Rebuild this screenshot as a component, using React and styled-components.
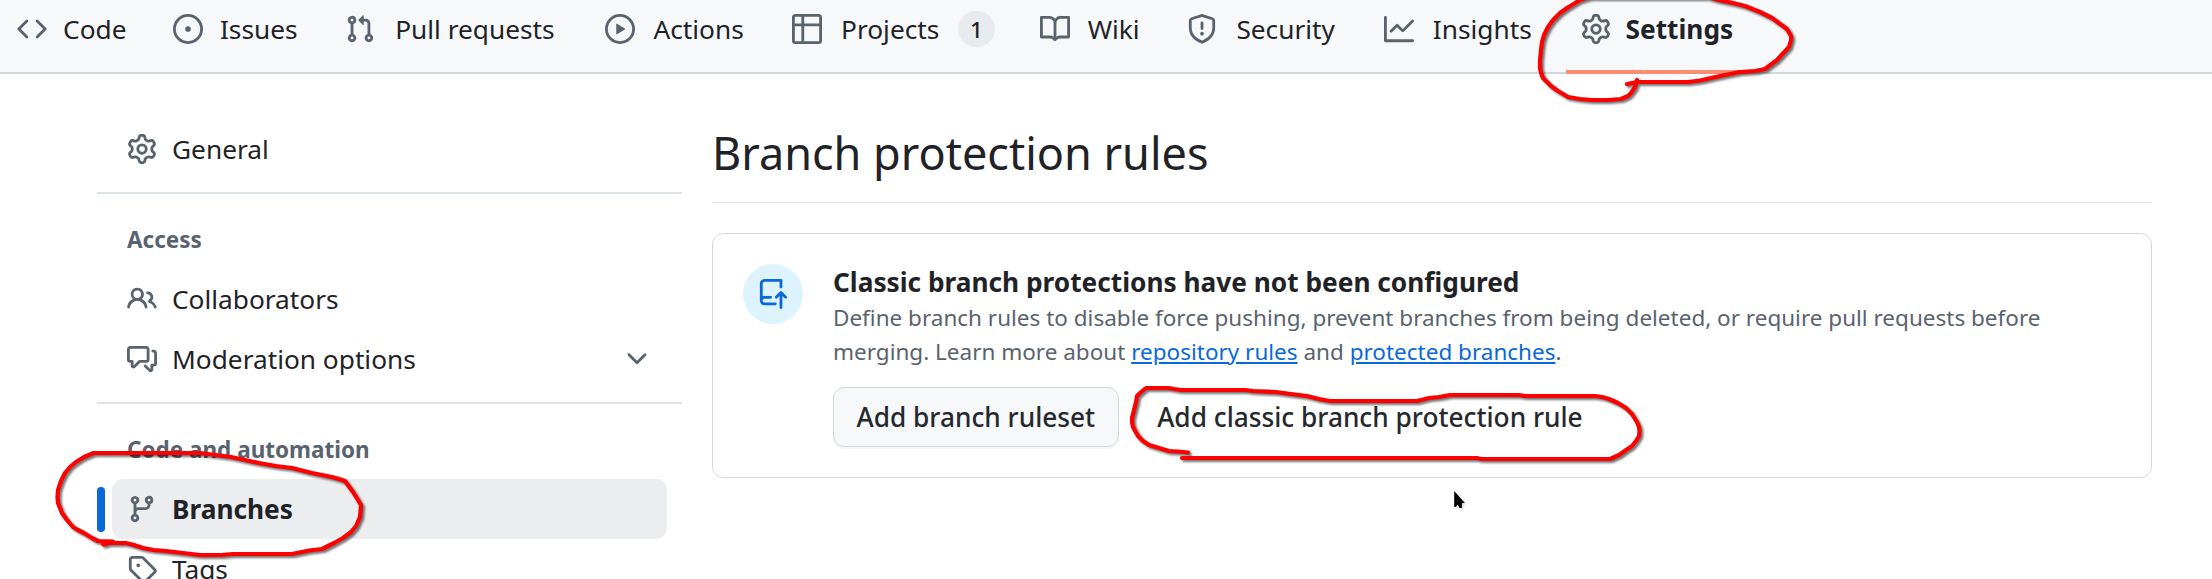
import React from "react";
import styled, { createGlobalStyle, css } from "styled-components";

const GlobalStyle = createGlobalStyle`
  *, *::before, *::after { box-sizing: border-box; }
  html, body { margin: 0; padding: 0; background: #ffffff; overflow: hidden; }
  body {
    color: #1f2328;
    font-family: "Noto Sans", "Liberation Sans", sans-serif;
    font-size: 26.25px;
    line-height: 40px;
  }
`;

const ICONS = {
  code: "m11.28 3.22 4.25 4.25a.75.75 0 0 1 0 1.06l-4.25 4.25a.749.749 0 0 1-1.275-.326.749.749 0 0 1 .215-.734L13.94 8l-3.72-3.72a.749.749 0 0 1 .326-1.275.749.749 0 0 1 .734.215Zm-6.56 0a.751.751 0 0 1 1.042.018.751.751 0 0 1 .018 1.042L2.06 8l3.72 3.72a.749.749 0 0 1-.326 1.275.749.749 0 0 1-.734-.215L.47 8.53a.75.75 0 0 1 0-1.06Z",
  issue: "M8 9.5a1.5 1.5 0 1 0 0-3 1.5 1.5 0 0 0 0 3ZM8 0a8 8 0 1 1 0 16A8 8 0 0 1 8 0ZM1.5 8a6.5 6.5 0 1 0 13 0 6.5 6.5 0 0 0-13 0Z",
  pull: "M1.5 3.25a2.25 2.25 0 1 1 3 2.122v5.256a2.251 2.251 0 1 1-1.5 0V5.372A2.25 2.25 0 0 1 1.5 3.25Zm5.677-.177L9.573.677A.25.25 0 0 1 10 .854V2.5h1A2.5 2.5 0 0 1 13.5 5v5.628a2.251 2.251 0 1 1-1.5 0V5a1 1 0 0 0-1-1h-1v1.646a.25.25 0 0 1-.427.177L7.177 3.427a.25.25 0 0 1 0-.354ZM3.75 2.5a.75.75 0 1 0 0 1.5.75.75 0 0 0 0-1.5Zm0 9.5a.75.75 0 1 0 0 1.5.75.75 0 0 0 0-1.5Zm8.25.75a.75.75 0 1 0 1.5 0 .75.75 0 0 0-1.5 0Z",
  play: "M8 0a8 8 0 1 1 0 16A8 8 0 0 1 8 0ZM1.5 8a6.5 6.5 0 1 0 13 0 6.5 6.5 0 0 0-13 0Zm4.879-2.773 4.264 2.559a.25.25 0 0 1 0 .428l-4.264 2.559A.25.25 0 0 1 6 10.559V5.442a.25.25 0 0 1 .379-.215Z",
  table: "M0 1.75C0 .784.784 0 1.75 0h12.5C15.216 0 16 .784 16 1.75v12.5A1.75 1.75 0 0 1 14.25 16H1.75A1.75 1.75 0 0 1 0 14.25ZM6.5 6.5v8h7.75a.25.25 0 0 0 .25-.25V6.5Zm8-1.5V1.75a.25.25 0 0 0-.25-.25H6.5V5Zm-13 1.5v7.75c0 .138.112.25.25.25H5v-8ZM5 5V1.5H1.75a.25.25 0 0 0-.25.25V5Z",
  book: "M0 1.75A.75.75 0 0 1 .75 1h4.253c1.227 0 2.317.59 3 1.501A3.743 3.743 0 0 1 11.006 1h4.245a.75.75 0 0 1 .75.75v10.5a.75.75 0 0 1-.75.75h-4.507a2.25 2.25 0 0 0-1.591.659l-.622.621a.75.75 0 0 1-1.06 0l-.622-.621A2.25 2.25 0 0 0 5.258 13H.75a.75.75 0 0 1-.75-.75Zm7.251 10.324.004-5.073-.002-2.253A2.25 2.25 0 0 0 5.003 2.5H1.5v9h3.757a3.75 3.75 0 0 1 1.994.574ZM8.755 4.75l-.004 7.322a3.752 3.752 0 0 1 1.992-.572H14.5v-9h-3.495a2.25 2.25 0 0 0-2.25 2.25Z",
  shield: "M7.467.133a1.748 1.748 0 0 1 1.066 0l5.25 1.68A1.75 1.75 0 0 1 15 3.48V7c0 1.566-.32 3.182-1.303 4.682-.983 1.498-2.585 2.813-5.032 3.855a1.697 1.697 0 0 1-1.33 0c-2.447-1.042-4.049-2.357-5.032-3.855C1.32 10.182 1 8.566 1 7V3.48a1.75 1.75 0 0 1 1.217-1.667Zm.61 1.429a.25.25 0 0 0-.153 0l-5.25 1.68a.25.25 0 0 0-.174.238V7c0 1.358.275 2.666 1.057 3.86.784 1.194 2.121 2.34 4.366 3.297a.196.196 0 0 0 .154 0c2.245-.956 3.582-2.104 4.366-3.298C13.225 9.666 13.5 8.36 13.5 7V3.48a.251.251 0 0 0-.174-.237l-5.25-1.68ZM8.75 4.75v3a.75.75 0 0 1-1.5 0v-3a.75.75 0 0 1 1.5 0ZM9 10.5a1 1 0 1 1-2 0 1 1 0 0 1 2 0Z",
  graph: "M1.5 1.75V13.5h13.75a.75.75 0 0 1 0 1.5H.75a.75.75 0 0 1-.75-.75V1.75a.75.75 0 0 1 1.5 0Zm14.28 2.53-5.25 5.25a.75.75 0 0 1-1.06 0L7 7.06 4.28 9.78a.751.751 0 0 1-1.042-.018.751.751 0 0 1-.018-1.042l3.25-3.25a.75.75 0 0 1 1.06 0L10 7.94l4.72-4.72a.751.751 0 0 1 1.042.018.751.751 0 0 1 .018 1.042Z",
  gear: "M8 0a8.2 8.2 0 0 1 .701.031C9.444.095 9.99.645 10.16 1.29l.288 1.107c.018.066.079.158.212.224.231.114.454.243.668.386.123.082.233.09.299.071l1.103-.303c.644-.176 1.392.021 1.82.63.27.385.506.792.704 1.218.315.675.111 1.422-.364 1.891l-.814.806c-.049.048-.098.147-.088.294.016.257.016.515 0 .772-.01.147.038.246.088.294l.814.806c.475.469.679 1.216.364 1.891a7.977 7.977 0 0 1-.704 1.217c-.428.61-1.176.807-1.82.63l-1.102-.302c-.067-.019-.177-.011-.3.071a5.909 5.909 0 0 1-.668.386c-.133.066-.194.158-.211.224l-.29 1.106c-.168.646-.715 1.196-1.458 1.26a8.006 8.006 0 0 1-1.402 0c-.743-.064-1.289-.614-1.458-1.26l-.289-1.106c-.018-.066-.079-.158-.212-.224a5.738 5.738 0 0 1-.668-.386c-.123-.082-.233-.09-.299-.071l-1.103.303c-.644.176-1.392-.021-1.82-.63a8.12 8.12 0 0 1-.704-1.218c-.315-.675-.111-1.422.363-1.891l.815-.806c.05-.048.098-.147.088-.294a6.214 6.214 0 0 1 0-.772c.01-.147-.038-.246-.088-.294l-.815-.806C.635 6.045.431 5.298.746 4.623a7.92 7.92 0 0 1 .704-1.217c.428-.61 1.176-.807 1.82-.63l1.102.302c.067.019.177.011.3-.071.214-.143.437-.272.668-.386.133-.066.194-.158.211-.224l.29-1.106C6.009.645 6.556.095 7.299.03 7.53.01 7.764 0 8 0Zm-.571 1.525c-.036.003-.108.036-.137.146l-.289 1.105c-.147.561-.549.967-.998 1.189-.173.086-.34.183-.5.29-.417.278-.97.423-1.529.27l-1.103-.303c-.109-.03-.175.016-.195.045-.22.312-.412.644-.573.99-.014.031-.021.11.059.19l.815.806c.411.406.562.957.53 1.456a4.709 4.709 0 0 0 0 .582c.032.499-.119 1.05-.53 1.456l-.815.806c-.081.08-.073.159-.059.19.162.346.353.677.573.989.02.03.085.076.195.046l1.102-.303c.56-.153 1.113-.008 1.53.27.161.107.328.204.501.29.447.222.85.629.997 1.189l.289 1.105c.029.109.101.143.137.146a6.6 6.6 0 0 0 1.142 0c.036-.003.108-.036.137-.146l.289-1.105c.147-.561.549-.967.998-1.189.173-.086.34-.183.5-.29.417-.278.97-.423 1.529-.27l1.103.303c.109.029.175-.016.195-.045.22-.313.411-.644.573-.99.014-.031.021-.11-.059-.19l-.815-.806c-.411-.406-.562-.957-.53-1.456a4.709 4.709 0 0 0 0-.582c-.032-.499.119-1.05.53-1.456l.815-.806c.081-.08.073-.159.059-.19a6.464 6.464 0 0 0-.573-.989c-.02-.03-.085-.076-.195-.046l-1.102.303c-.56.153-1.113.008-1.53-.27a4.44 4.44 0 0 0-.501-.29c-.447-.222-.85-.629-.997-1.189l-.289-1.105c-.029-.11-.101-.143-.137-.146a6.6 6.6 0 0 0-1.142 0ZM11 8a3 3 0 1 1-6 0 3 3 0 0 1 6 0ZM9.5 8a1.5 1.5 0 1 0-3.001.001A1.5 1.5 0 0 0 9.5 8Z",
  people: "M2 5.5a3.5 3.5 0 1 1 5.898 2.549 5.508 5.508 0 0 1 3.034 4.084.75.75 0 1 1-1.482.235 4 4 0 0 0-7.9 0 .75.75 0 0 1-1.482-.236A5.507 5.507 0 0 1 3.102 8.05 3.493 3.493 0 0 1 2 5.5ZM11 4a3.001 3.001 0 0 1 2.22 5.018 5.01 5.01 0 0 1 2.56 3.012.749.749 0 0 1-.885.954.752.752 0 0 1-.549-.514 3.507 3.507 0 0 0-2.522-2.372.75.75 0 0 1-.574-.73v-.352a.75.75 0 0 1 .416-.672A1.5 1.5 0 0 0 11 5.5.75.75 0 0 1 11 4Zm-5.5-.5a2 2 0 1 0-.001 3.999A2 2 0 0 0 5.5 3.5Z",
  discussion: "M1.75 1h8.5c.966 0 1.75.784 1.75 1.75v5.5A1.75 1.75 0 0 1 10.25 10H7.061l-2.574 2.573A1.458 1.458 0 0 1 2 11.543V10h-.25A1.75 1.75 0 0 1 0 8.25v-5.5C0 1.784.784 1 1.75 1ZM1.5 2.75v5.5c0 .138.112.25.25.25h1a.75.75 0 0 1 .75.75v2.19l2.72-2.72a.749.749 0 0 1 .53-.22h3.5a.25.25 0 0 0 .25-.25v-5.5a.25.25 0 0 0-.25-.25h-8.5a.25.25 0 0 0-.25.25Zm13 2a.25.25 0 0 0-.25-.25h-.5a.75.75 0 0 1 0-1.5h.5c.966 0 1.75.784 1.75 1.75v5.5A1.75 1.75 0 0 1 14.25 12H14v1.543a1.458 1.458 0 0 1-2.487 1.03L9.22 12.28a.749.749 0 0 1 .326-1.275.749.749 0 0 1 .734.215l2.22 2.22v-2.19a.75.75 0 0 1 .75-.75h1a.25.25 0 0 0 .25-.25Z",
  chevron: "M12.78 5.22a.749.749 0 0 1 0 1.06l-4.25 4.25a.749.749 0 0 1-1.06 0L3.22 6.28a.749.749 0 1 1 1.06-1.06L8 8.939l3.72-3.719a.749.749 0 0 1 1.06 0Z",
  branch: "M9.5 3.25a2.25 2.25 0 1 1 3 2.122V6A2.5 2.5 0 0 1 10 8.5H6a1 1 0 0 0-1 1v1.128a2.251 2.251 0 1 1-1.5 0V5.372a2.25 2.25 0 1 1 1.5 0v1.836A2.493 2.493 0 0 1 6 7h4a1 1 0 0 0 1-1v-.628A2.25 2.25 0 0 1 9.5 3.25Zm-6 0a.75.75 0 1 0 1.5 0 .75.75 0 0 0-1.5 0Zm8.25-.75a.75.75 0 1 0 0 1.5.75.75 0 0 0 0-1.5ZM4.25 12a.75.75 0 1 0 0 1.5.75.75 0 0 0 0-1.5Z",
  tag: "M1 7.775V2.75C1 1.784 1.784 1 2.75 1h5.025c.464 0 .91.184 1.238.513l6.25 6.25a1.75 1.75 0 0 1 0 2.474l-5.026 5.026a1.75 1.75 0 0 1-2.474 0l-6.25-6.25A1.752 1.752 0 0 1 1 7.775Zm1.5 0c0 .066.026.13.073.177l6.25 6.25a.25.25 0 0 0 .354 0l5.025-5.025a.25.25 0 0 0 0-.354l-6.25-6.25a.25.25 0 0 0-.177-.073H2.75a.25.25 0 0 0-.25.25ZM6 5a1 1 0 1 1 0 2 1 1 0 0 1 0-2Z",
  push: "M1 2.5A2.5 2.5 0 0 1 3.5 0h8.75a.75.75 0 0 1 .75.75v3.5a.75.75 0 0 1-1.5 0V1.5h-8a1 1 0 0 0-1 1v6.708A2.493 2.493 0 0 1 3.5 9h3.25a.75.75 0 0 1 0 1.5H3.5a1 1 0 0 0 0 2h5.75a.75.75 0 0 1 0 1.5H3.5A2.5 2.5 0 0 1 1 11.5Zm13.23 7.79h-.001l-1.224-1.224v6.184a.75.75 0 0 1-1.5 0V9.066L10.28 10.29a.75.75 0 0 1-1.06-1.061l2.505-2.504a.75.75 0 0 1 1.06 0L15.29 9.23a.751.751 0 0 1-.018 1.042.751.751 0 0 1-1.042.018Z",
};

const IconSvg = styled.svg`
  display: block;
  flex: none;
  width: 30px;
  height: 30px;
  fill: currentColor;
  color: ${(p) => p.$color || "#59636e"};
`;

const Icon = ({ name, color }) => (
  <IconSvg viewBox="0 0 16 16" $color={color} aria-hidden="true">
    <path d={ICONS[name]} />
  </IconSvg>
);

const Page = styled.div`
  position: relative;
  width: 2212px;
  height: 579px;
  overflow: hidden;
  background: #ffffff;
`;

const RepoNav = styled.nav`
  display: flex;
  gap: 15px;
  height: 74px;
  padding-left: 2px;
  background: #f6f8fa;
  border-bottom: 2px solid #d1d9e0;
`;

const NavItem = styled.a`
  display: flex;
  align-items: center;
  gap: 15px;
  height: 74px;
  padding: 0 15px 16px;
  font-weight: ${(p) => (p.$current ? 700 : 400)};
  white-space: nowrap;
  ${(p) =>
    p.$current &&
    css`
      background: linear-gradient(#fd8c73, #fd8c73) bottom / 100% 4px no-repeat;
      border-radius: 0 0 2px 2px;
    `}
`;

/* Reserves the width of the bold label so that tabs keep their place when selected. */
const NavLabel = styled.span`
  text-align: center;
  &::before {
    content: attr(data-content);
    display: block;
    height: 0;
    font-weight: 700;
    visibility: hidden;
  }
`;

const Counter = styled.span`
  min-width: 37px;
  height: 36px;
  padding: 0 11px;
  border-radius: 36px;
  background: #e7ebee;
  font-size: 22.5px;
  font-weight: 500;
  line-height: 37px;
  text-align: center;
`;

const Columns = styled.div`
  display: flex;
  gap: 30px;
  padding: 45px 60px 0 97px;
`;

const Sidebar = styled.aside`
  flex: none;
  width: 585px;
`;

const SideLink = styled.a`
  position: relative;
  display: flex;
  align-items: center;
  gap: 15px;
  height: 60px;
  margin: 0 15px;
  padding: 0 15px;
  border-radius: 11.25px;
  font-weight: ${(p) => (p.$current ? 700 : 400)};
  background: ${(p) => (p.$current ? "#ecedef" : "transparent")};
  ${(p) =>
    p.$current &&
    css`
      &::after {
        content: "";
        position: absolute;
        left: -15px;
        top: 8px;
        width: 7.5px;
        height: 45px;
        border-radius: 3.75px;
        background: #0969da;
      }
    `}
`;

const SideLabel = styled.span`
  flex: 1;
`;

const Divider = styled.hr`
  height: 2px;
  margin: 13px 0;
  border: 0;
  background: #dde2e7;
`;

const SideHeading = styled.h3`
  margin: 0;
  padding: 15px 30px 0;
  height: 62px;
  color: #59636e;
  font-size: 22.5px;
  font-weight: 700;
  line-height: 35px;
`;

const Main = styled.main`
  flex: 1;
`;

const Title = styled.h2`
  height: 84px;
  margin: 0 0 30px;
  border-bottom: 1px solid #dde2e7;
  font-size: 45px;
  font-weight: 400;
  line-height: 67px;
`;

const Card = styled.section`
  display: flex;
  gap: 30px;
  padding: 30px;
  border: 1px solid #d1d9e0;
  border-radius: 11.25px;
`;

const Visual = styled.div`
  display: grid;
  place-items: center;
  flex: none;
  width: 60px;
  height: 60px;
  border-radius: 50%;
  background: #ddf4ff;
`;

const CardBody = styled.div`
  flex: 1;
`;

const CardTitle = styled.h3`
  margin: 0;
  font-size: 26.25px;
  font-weight: 700;
  line-height: 36px;
`;

const Description = styled.p`
  margin: 0.5px 0 18.5px;
  max-width: 1250px;
  color: #59636e;
  font-size: 22.5px;
  line-height: 34px;
`;

const TextLink = styled.a`
  color: #0969da;
  text-decoration: underline;
`;

const Actions = styled.div`
  display: flex;
  gap: 15px;
`;

const Button = styled.button`
  height: 60px;
  padding: 0 22.5px;
  border: 1px solid ${(p) => (p.$plain ? "transparent" : "#d1d9e0")};
  border-radius: 11.25px;
  background: ${(p) => (p.$plain ? "transparent" : "#f6f8fa")};
  box-shadow: ${(p) => (p.$plain ? "none" : "0 2px 0 rgba(31, 35, 40, 0.04)")};
  color: #25292e;
  font: 500 26.25px/40px "Noto Sans", "Liberation Sans", sans-serif;
  white-space: nowrap;
`;

const Overlay = styled.svg`
  position: absolute;
  inset: 0;
  width: 2212px;
  height: 579px;
  pointer-events: none;
`;

const Ink = styled.polyline`
  fill: none;
  stroke: #ff0000;
  stroke-width: 4.2;
  stroke-linecap: round;
  stroke-linejoin: round;
  filter: drop-shadow(2px 2px 1px rgba(0, 0, 0, 0.55));
`;

const STROKES = [
  "1637,80 1635,87 1631,93 1628,96 1621,99 1608,100 1592,100 1580,99 1568,97 1558,91 1551,86 1543,78 1541,73 1540,68 1540,60 1541,50 1542,42 1544,35 1548,27 1553,20 1560,13 1567,8 1580,0 1590,-3 1708,-3 1718,0 1733,3 1745,6 1760,12 1772,18 1787,29 1791,36 1791,40 1789,47 1777,60 1765,69 1755,71 1740,72 1720,76 1700,80.5 1688,82 1637,82 1627,84",
  "104,544.5 113,541.5 98,541 92,538 84,533 78,530 73,527 67,520 62,513 58,503 57.5,497 58,490 61,481 65,473 70,467 76,462 84,457 93.5,453 190,453 200,453 216,455 231,457 245,460 259,463 276,466 292,468 312,473 332,477 339,479 345,481 353,492 358,500 361,505 360.5,511 360,517 356,526 351,532 343,538 334,543 322,549 309,550.5 292,554 233,554 221,555 200,555 183,553 166,551 154,550 143,548 134,545 126,543 107,543 103,544",
  "1188,452.5 1178,451.5 1169,451 1159,448 1149,445 1143,441 1138,436 1133,427 1132,422 1132,418 1134,410 1136,402 1137,396 1140,393 1146,388 1169,388 1174,389 1181,390 1245,390 1253,391 1276,392 1291,394 1307,396 1319,399 1330,401 1417,401 1429,398 1439,397 1450,395 1519,395 1525,396 1595,396 1602,397 1609,399 1618,403 1626,408 1632,414 1637,422 1639,427 1639.5,431 1639,436 1636,441 1632,446 1626,450 1619,455 1610,459 1481,459 1477,458 1182,458",
];

const Pointer = styled.path`
  fill: #000000;
  filter: drop-shadow(1px 1px 1px rgba(0, 0, 0, 0.2));
`;

const TABS = [
  { icon: "code", label: "Code" },
  { icon: "issue", label: "Issues" },
  { icon: "pull", label: "Pull requests" },
  { icon: "play", label: "Actions" },
  { icon: "table", label: "Projects", count: 1 },
  { icon: "book", label: "Wiki" },
  { icon: "shield", label: "Security" },
  { icon: "graph", label: "Insights" },
  { icon: "gear", label: "Settings", current: true },
];

const SideItem = ({ icon, label, current, expandable }) => (
  <SideLink $current={current}>
    <Icon name={icon} />
    <SideLabel>{label}</SideLabel>
    {expandable && <Icon name="chevron" />}
  </SideLink>
);

export default function App() {
  return (
    <Page>
      <GlobalStyle />
      <RepoNav>
        {TABS.map((t) => (
          <NavItem key={t.label} $current={t.current}>
            <Icon name={t.icon} />
            <NavLabel data-content={t.label}>{t.label}</NavLabel>
            {t.count && <Counter>{t.count}</Counter>}
          </NavItem>
        ))}
      </RepoNav>
      <Columns>
        <Sidebar>
          <SideItem icon="gear" label="General" />
          <Divider />
          <SideHeading>Access</SideHeading>
          <SideItem icon="people" label="Collaborators" />
          <SideItem icon="discussion" label="Moderation options" expandable />
          <Divider />
          <SideHeading>Code and automation</SideHeading>
          <SideItem icon="branch" label="Branches" current />
          <SideItem icon="tag" label="Tags" />
        </Sidebar>
        <Main>
          <Title>Branch protection rules</Title>
          <Card>
            <Visual>
              <Icon name="push" color="#0969da" />
            </Visual>
            <CardBody>
              <CardTitle>Classic branch protections have not been configured</CardTitle>
              <Description>
                Define branch rules to disable force pushing, prevent branches from being deleted, or
                require pull requests before merging. Learn more about{" "}
                <TextLink>repository rules</TextLink> and <TextLink>protected branches</TextLink>.
              </Description>
              <Actions>
                <Button>Add branch ruleset</Button>
                <Button $plain>Add classic branch protection rule</Button>
              </Actions>
            </CardBody>
          </Card>
        </Main>
      </Columns>
      <Overlay viewBox="0 0 2212 579">
        {STROKES.map((points) => (
          <Ink key={points} points={points} />
        ))}
        <Pointer d="M1454.2 491V507h1.3l2.2-2.4 1.8 3.4h2.4v-5h3Z" />
      </Overlay>
    </Page>
  );
}
